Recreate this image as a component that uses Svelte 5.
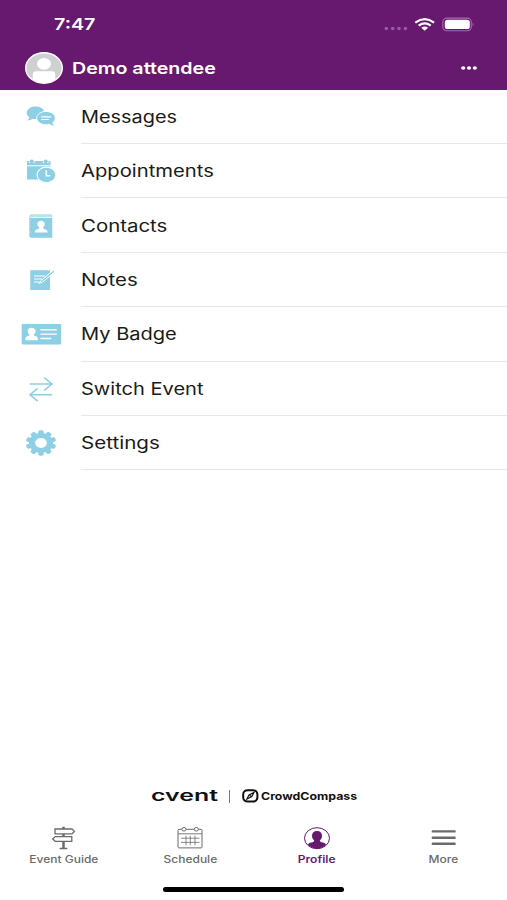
<script>
  const items = [
    { icon: "messages", label: "Messages", stretch: 1.17 },
    { icon: "appointments", label: "Appointments", stretch: 1.19 },
    { icon: "contacts", label: "Contacts", stretch: 1.2 },
    { icon: "notes", label: "Notes", stretch: 1.2 },
    { icon: "badge", label: "My Badge", stretch: 1.18 },
    { icon: "switch", label: "Switch Event", stretch: 1.18 },
    { icon: "settings", label: "Settings", stretch: 1.21 },
  ];

  const tabs = ["Event Guide", "Schedule", "Profile", "More"];

  let active = $state("Profile");

  const teeth = Array.from({ length: 10 }, (_, i) => i * 36);
</script>

<div class="screen">
  <header>
    <div class="status">
      <span class="time wide">7:47</span>
      <svg class="signals" width="94" height="20" viewBox="0 0 94 20">
        <g fill="#9a5ba6">
          <circle cx="5.3" cy="14.5" r="1.8" />
          <circle cx="11.7" cy="14.5" r="1.8" />
          <circle cx="18" cy="14.5" r="1.8" />
          <circle cx="24.4" cy="14.5" r="1.8" />
        </g>
        <g fill="none" stroke="#fff" stroke-width="2.1">
          <path d="M34.300 8.600Q43.700 1.600 53.100 8.600" />
          <path d="M37.700 11.700Q43.700 7.200 49.700 11.700" />
        </g>
        <path d="M40.300 13.800Q43.700 11.200 47.100 13.800L43.700 16.700Z" fill="#fff" />
        <rect x="61.8" y="4.1" width="28.5" height="12.6" rx="4" fill="none" stroke="#a56db0" stroke-width="1.1" />
        <rect x="63.8" y="5.8" width="25" height="9.200" rx="2.6" fill="#fff" />
        <path d="M91.600 8.600q2.200 1.800 0 3.600z" fill="#a56db0" />
      </svg>
    </div>
    <div class="user">
      <svg class="avatar" width="38" height="32" viewBox="0 0 38 32">
        <ellipse cx="19" cy="16" rx="18.3" ry="15.3" fill="#cfd0d1" stroke="#fff" stroke-width="1.4" />
        <ellipse cx="19" cy="11.8" rx="7" ry="5.9" fill="#fff" />
        <path d="M7.8 27.8V22q0-2.8 3.6-2.8h15.2q3.6 0 3.6 2.8v5.8Q25 31 19 31T7.8 27.8z" fill="#fff" />
      </svg>
      <span class="name wide">Demo attendee</span>
      <button class="dots" aria-label="Options">
        <svg width="18" height="6" viewBox="0 0 18 6" fill="#fff">
          <ellipse cx="3.2" cy="3" rx="2.1" ry="1.8" />
          <ellipse cx="9" cy="3" rx="2.1" ry="1.8" />
          <ellipse cx="14.8" cy="3" rx="2.1" ry="1.8" />
        </svg>
      </button>
    </div>
  </header>

  <ul class="menu">
    {#each items as item}
      <li>
        <svg class="icon" width="48" height="40" viewBox="0 0 48 40" fill="#8dcfe5">
          {#if item.icon === "messages"}
            <path d="M18.6 9.6c5 0 8.8 2.7 8.8 6.2s-3.8 6.3-8.8 6.3c-1.1 0-2.1-.1-3.1-.4-1.4 1-3.3 1.6-5.2 1.7 1.3-1 1.9-2 2-3.1-1.6-1.1-2.6-2.7-2.6-4.5 0-3.5 4-6.2 8.9-6.2z" />
            <path d="M29 14.4c5.2 0 9.3 3 9.3 6.7 0 1.8-.9 3.3-2.4 4.6.2 1.3.9 2.3 2.4 3.400-2.200 0-4.100-.6-5.800-1.700-1.100.3-2.300.4-3.500.4-5.200 0-9.300-3-9.300-6.700s4.100-6.700 9.300-6.700z" stroke="#fff" stroke-width="1" />
            <path d="M24.2 19.8h10M24.2 22.5h7.6" stroke="#fff" stroke-width="1.2" />
          {:else if item.icon === "appointments"}
            <path d="M10 10h23.500v4.200H10zM10 15.200h23.500v13.200H10z" />
            <path d="M14.7 12V9m14 3V9" stroke="#fff" stroke-width="5.600" />
            <ellipse cx="14.7" cy="10.3" rx="2.1" ry="1.9" />
            <ellipse cx="28.7" cy="10.3" rx="2.1" ry="1.9" />
            <ellipse cx="29.4" cy="23.900" rx="9.3" ry="7.8" stroke="#fff" stroke-width="1.1" />
            <path d="M29.3 19.2v5.500h4" fill="none" stroke="#fff" stroke-width="1.5" />
          {:else if item.icon === "contacts"}
            <path d="M13.6 8.3h21.6v3H14.4q-2 0-2-1.5t1.2-1.5z" opacity=".6" />
            <path d="M12.3 10.2q.5 1.8 2.3 1.8h20.7v19.700h-21q-2 0-2-1.600z" />
            <path d="M12.3 14h1.5M12.3 20h1.5M12.3 26h1.5" stroke="#fff" stroke-width=".7" opacity=".6" />
            <path d="M24 14.8c2.3 0 3.8 1.3 3.8 3.3 0 1.5-.7 2.6-1.8 3.5.1 1.2.9 1.4 2.4 1.8 1.5.5 2.2 1.2 2.2 3.1H17.7c0-1.9.7-2.6 2.2-3.1 1.5-.4 2.2-.6 2.3-1.8-1.1-.9-1.9-2-1.9-3.5 0-2 1.4-3.3 3.7-3.3z" fill="#fff" />
          {:else if item.icon === "notes"}
            <path d="M13.3 10.2H33V30H13.300z" />
            <path d="M17 16h11M17 19h8M17 22h5" stroke="#fff" stroke-width="1.1" />
            <path d="M23.800 20.800 36.300 10.400l1.600 1.300-12.200 10.300-3.700 1.400z" stroke="#fff" stroke-width="1" />
          {:else if item.icon === "badge"}
            <rect x="4.7" y="10" width="39.4" height="20.4" rx=".8" />
            <path d="M14.6 13.7c2.5 0 4 1.4 4 3.5 0 1.5-.7 2.6-1.8 3.4.1 1.2.8 1.4 2 1.7 1.6.5 2.3 1.6 2.3 3.9h-13c0-2.3.7-3.4 2.3-3.9 1.2-.3 2-.5 2.1-1.7-1.2-.8-1.9-1.9-1.9-3.4 0-2.1 1.5-3.5 4-3.5z" fill="#fff" />
            <path d="M23.4 15.8h16.4M23.4 20.1h16.4M23.4 24.5h10.8" stroke="#fff" stroke-width="1.4" />
          {:else if item.icon === "switch"}
            <path d="M12.8 15H35M27.2 8.6 35 15l-7.8 6.4M35.2 25.7H13M20.6 19.4 13 25.7l7.6 6.4" fill="none" stroke="#8dcfe5" stroke-width="1.5" />
          {:else}
            <g transform="translate(24 20) scale(1.2 1)">
              {#each teeth as angle}
                <rect x="-2.3" y="-12.7" width="4.6" height="6" rx="1.6" transform="rotate({angle})" />
              {/each}
              <circle r="7.500" fill="none" stroke="#8dcfe5" stroke-width="5.2" />
            </g>
          {/if}
        </svg>
        <div class="row">
          <span class="wide" style="--stretch: {item.stretch}">{item.label}</span>
        </div>
      </li>
    {/each}
  </ul>

  <div class="brand">
    <span class="cvent"><span class="wide">cvent</span></span>
    <span class="bar"></span>
    <svg width="17" height="14" viewBox="0 0 17 14" fill="none" stroke="#111">
      <rect x="1.2" y="1.2" width="14.2" height="11.4" rx="4.6" ry="4" stroke-width="2" />
      <path d="M4.8 10.2 7 5.9l5-2.5-2.2 4.2z" stroke-width="1.2" />
      <path d="m7.5 6.2 2 1.6" stroke-width="1.2" />
    </svg>
    <span class="crowd wide">CrowdCompass</span>
  </div>

  <nav>
    {#each tabs as tab}
      <button class:active={active === tab} onclick={() => (active = tab)}>
        <svg width="30" height="26" viewBox="0 0 30 26" fill="none" stroke="currentColor">
          {#if tab === "Event Guide"}
            <path d="M7 4h17l2.400 2.400L24 8.800H7zM23.800 11.600H7.200l-2.500 2.300 2.500 2.400h16.600z" stroke-width="1.300" />
            <path d="M15.500 1.800V4M15.500 8.800v2.800M15.500 16.300v6.900" stroke-width="2.500" />
            <path d="M11.600 23.500h7.800" stroke-width="1.5" />
          {:else if tab === "Schedule"}
            <rect x="3" y="4.3" width="24" height="18.6" rx="1" stroke-width="1" />
            <path d="M3 8.8h24" stroke-width=".9" />
            <path d="M6 13.2h18.5M6 17.4h18.5M11 10.6v9.8M15.3 10.6v9.8M20 10.6v9.8" stroke-width=".8" />
            <ellipse cx="9" cy="4.3" rx="2.1" ry="1.8" fill="#fff" stroke-width="1" />
            <ellipse cx="21.3" cy="4.3" rx="2.1" ry="1.8" fill="#fff" stroke-width="1" />
          {:else if tab === "Profile"}
            <ellipse cx="15" cy="13.2" rx="12.5" ry="10.5" stroke-width="1" />
            <path d="M15 6c3.1 0 5 1.9 5 4.7 0 2.1-.8 3.5-2.2 4.6.2 1.6 1 1.8 2.9 2.3 1.700.4 2.900 1 3.400 2.200Q20.500 23.500 15 23.500T5.900 19.800c.5-1.200 1.700-1.800 3.400-2.200 1.900-.5 2.700-.7 2.900-2.300-1.400-1.100-2.200-2.500-2.200-4.600C10 7.900 11.900 6 15 6z" fill="currentColor" stroke="none" />
          {:else}
            <path d="M3.800 6.400h21.800M3.800 12.700h21.800M3.800 18.800h21.800" stroke-width="2.400" stroke-linecap="round" />
          {/if}
        </svg>
        <span>{tab}</span>
      </button>
    {/each}
  </nav>
  <div class="home"></div>
</div>

<style>
  :global(body) {
    margin: 0;
    background: #fff;
  }

  .screen {
    display: flex;
    flex-direction: column;
    width: 507px;
    height: 900px;
    overflow: hidden;
    background: #fff;
    color: #1a1a1a;
    font-family: Inter, "Liberation Sans", sans-serif;
  }

  button {
    padding: 0;
    border: 0;
    background: none;
    font: inherit;
    cursor: pointer;
  }

  svg {
    display: block;
    flex: none;
  }

  .wide {
    display: inline-block;
    white-space: nowrap;
    transform: scaleX(var(--stretch, 1.2));
    transform-origin: 0 50%;
  }

  header {
    flex: none;
    box-sizing: border-box;
    height: 89.6px;
    padding-top: 14px;
    background: #66196f;
    color: #fff;
  }

  .status {
    display: flex;
    align-items: center;
    justify-content: space-between;
    height: 20px;
    padding: 0 32px 0 54px;
  }

  .time {
    --stretch: 1.23;
    font-size: 16px;
    font-weight: 600;
  }

  .user {
    display: flex;
    align-items: center;
    height: 32px;
    padding: 18px 29px 0 24.5px;
  }

  .name {
    --stretch: 1.19;
    margin-left: 9.5px;
    font-size: 16.5px;
    font-weight: 600;
  }

  .dots {
    margin-left: auto;
  }

  .menu {
    flex: none;
    margin: 0;
    padding: 0;
    list-style: none;
  }

  li {
    display: flex;
    align-items: center;
    height: 54.4px;
    padding-left: 17px;
  }

  .row {
    display: flex;
    flex: 1;
    align-items: center;
    box-sizing: border-box;
    height: 100%;
    margin-left: 16px;
    padding-top: 1px;
    border-bottom: 1px solid #e8e8e8;
    font-size: 17px;
  }

  .brand {
    display: flex;
    align-items: center;
    height: 18px;
    margin-top: auto;
    padding-left: 151px;
    color: #111;
  }

  .cvent {
    --stretch: 1.66;
    width: 78px;
    font-size: 15px;
    line-height: 18px;
    font-weight: 600;
  }

  .bar {
    width: 1px;
    height: 13px;
    margin-right: 12px;
    background: #777;
  }

  .crowd {
    --stretch: 1.175;
    margin-left: 2px;
    font-size: 10.5px;
    font-weight: 700;
  }

  nav {
    display: grid;
    flex: none;
    grid-template-columns: repeat(4, 1fr);
    height: 62px;
    padding-top: 20px;
  }

  nav button {
    display: flex;
    flex-direction: column;
    align-items: center;
    color: #6b6b6b;
  }

  nav span {
    margin-top: 2px;
    font-size: 10px;
    line-height: 13px;
    font-weight: 500;
    transform: scaleX(1.2);
  }

  nav .active {
    color: #66196f;
  }

  nav .active span {
    font-weight: 600;
  }

  .home {
    flex: none;
    width: 181px;
    height: 5px;
    margin: 0 auto 8px;
    border-radius: 3px;
    background: #000;
  }
</style>
